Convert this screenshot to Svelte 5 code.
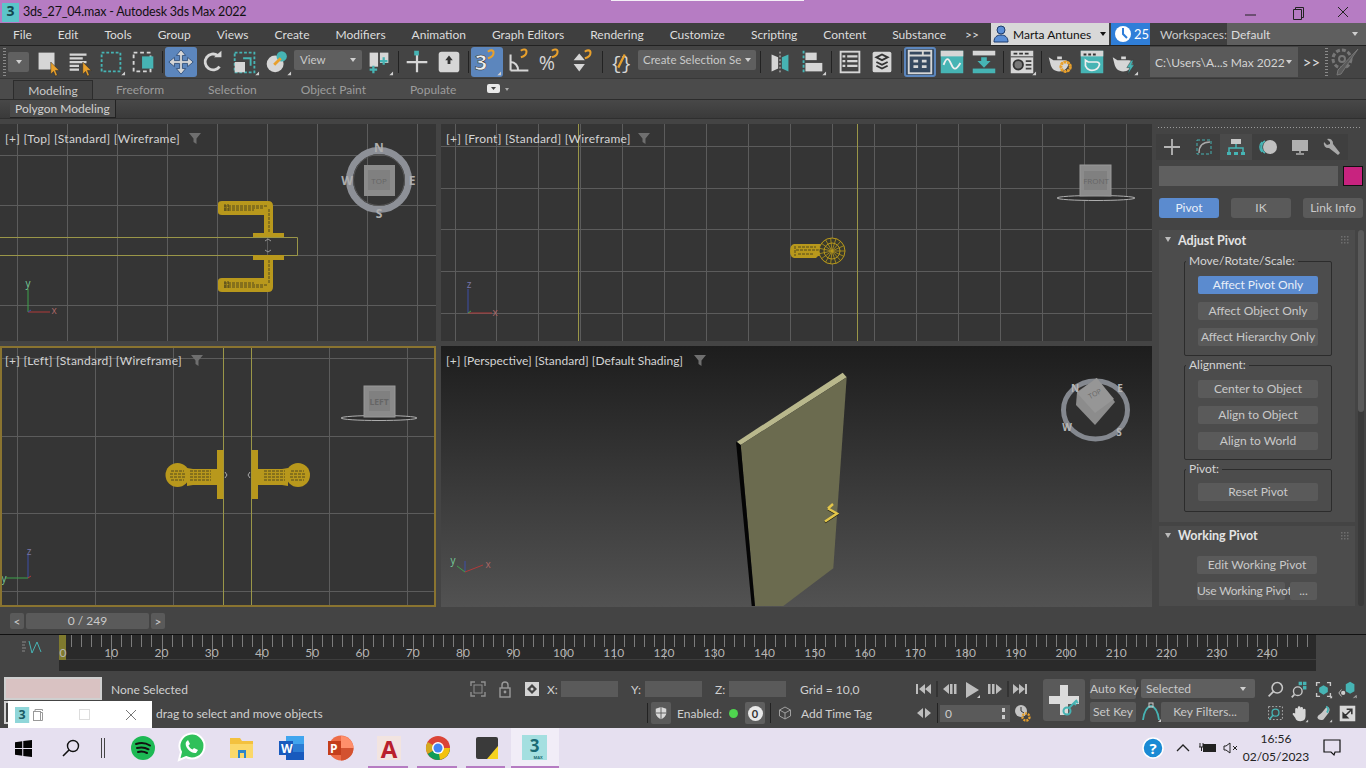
<script>
  const menu = ['File', 'Edit', 'Tools', 'Group', 'Views', 'Create', 'Modifiers', 'Animation', 'Graph Editors', 'Rendering', 'Customize', 'Scripting', 'Content', 'Substance'];
  const ribbonTabs = ['Freeform', 'Selection', 'Object Paint', 'Populate'];

  const T = '#46b4b4', W = '#d6d6d6', O = '#e8a02c';
  const corner = `<path d="M31 30v-4l-4 4z" fill="#d0d0d0"/>`;
  const cursor = (x, y) => `<path d="M${x} ${y}l0 13 3-3 2 5 2-1-2-5 4 0z" fill="${O}" stroke="#222" stroke-width=".5"/>`;
  const magnet = (x, y) => `<path d="M${x} ${y + 7}c3-1 6-3 6-6 0-3-4-3-6-1" fill="none" stroke="${O}" stroke-width="2.200"/>`;
  const teapot = (stroke) => `<path d="M4 11l5 3h12c3 0 4 2 4 4-1 5-5 8-10 8s-8-3-9-7zM13 10h5v3h-5z" fill="${stroke ? 'none' : W}" ${stroke ? `stroke="#eee" stroke-width="2"` : ''}/>`;

  const leftTools = [
    { w: 32, svg: `<rect x="7" y="6" width="17" height="18" fill="${W}"/>${cursor(20, 16)}` },
    { w: 32, svg: `<path d="M6 8h18M6 12h14M6 16h18M6 20h10M6 24h10" stroke="${W}" stroke-width="2.400"/>${cursor(20, 16)}` },
    { w: 32, svg: `<rect x="6" y="6" width="20" height="20" fill="none" stroke="${T}" stroke-width="2" stroke-dasharray="3 2"/>${corner}` },
    { w: 32, svg: `<rect x="6" y="6" width="18" height="20" fill="none" stroke="${W}" stroke-width="2" stroke-dasharray="4 3"/><rect x="15" y="10" width="12" height="13" fill="${T}"/>` },
    'sep',
    { w: 32, on: true, svg: `<path d="M16 3l5 6h-3.500v5.500H23V11l6 5-6 5v-3.500h-5.500V23H21l-5 6-5-6h3.500v-5.500H9V21l-6-5 6-5v3.500h5.500V9H11z" fill="${W}" stroke="#33527d"/>` },
    { w: 32, svg: `<path d="M23 21a8.500 8.500 0 1 1-2-12" fill="none" stroke="${W}" stroke-width="3"/><path d="M17 11h8V4z" fill="${W}"/>` },
    { w: 32, svg: `<rect x="5" y="6" width="21" height="21" fill="none" stroke="${T}" stroke-width="2" stroke-dasharray="3 2"/><rect x="5" y="16" width="11" height="11" fill="${W}"/><path d="M14 12h8v8" fill="none" stroke="${T}" stroke-width="2"/>${corner}` },
    { w: 32, svg: `<circle cx="14" cy="18" r="9" fill="${W}"/><circle cx="21" cy="10" r="5.500" fill="${T}"/><path d="M20 12l-7 7" stroke="${O}" stroke-width="3"/>${corner}` }
  ];

  const midTools = [
    { w: 32, svg: `<path d="M6 6h9v15H6z" fill="${W}"/><path d="M17 6h9v11h-9z" fill="${W}"/><path d="M10 20v8M6 24h8M21 11v8M17 15h8" stroke="${T}" stroke-width="2.400"/>${corner}` },
    'sep',
    { w: 32, svg: `<path d="M16 7v20M5 16h22" stroke="${W}" stroke-width="2.400"/><rect x="13" y="4" width="5" height="5" fill="${T}"/>` },
    { w: 32, svg: `<rect x="5" y="5" width="22" height="22" rx="3" fill="${W}"/><path d="M16 9l4 5h-2.500v4h-3v-4H12z" fill="#333"/>` },
    'sep',
    { w: 32, on: true, svg: `<text x="3" y="24" font-size="23" font-weight="700" fill="#eee" stroke="#333" stroke-width=".6" font-family="Open Sans">3</text>${magnet(17, 5)}${corner}` },
    { w: 32, svg: `<path d="M7 25V8M7 25h19M7 16c5 0 8 4 8 9" fill="none" stroke="${W}" stroke-width="2.200"/>${magnet(18, 4)}` },
    { w: 32, svg: `<text x="3" y="25" font-size="21" fill="${W}" font-family="Open Sans">%</text>${magnet(17, 4)}` },
    { w: 32, svg: `<path d="M6 14l6-7 6 7zM6 18h12l-6 8z" fill="${W}"/>${magnet(18, 5)}` },
    'sep',
    { w: 32, svg: `<text x="5" y="23" font-size="19" fill="${W}" font-family="Liberation Mono">{</text><text x="16" y="23" font-size="19" fill="${W}" font-family="Liberation Mono">}</text><path d="M13 22l7-14" stroke="${O}" stroke-width="2.400"/>` }
  ];

  const rightTools = [
    { w: 32, svg: `<path d="M7 8l7 3v12l-7 3z" fill="${W}"/><path d="M25 8l-7 3v12l7 3z" fill="${T}"/><path d="M16 5v23" stroke="${W}" stroke-dasharray="2 2"/>` },
    { w: 32, svg: `<path d="M7 4v24" stroke="${T}" stroke-width="2" stroke-dasharray="3 2"/><rect x="9" y="6" width="12" height="8" fill="${W}"/><rect x="9" y="17" width="18" height="9" fill="${W}"/>${corner}` },
    'sep',
    { w: 32, svg: `<rect x="6" y="5" width="20" height="22" fill="none" stroke="${W}" stroke-width="2"/><path d="M8 10h3M13 10h11M8 15h3M13 15h11M8 20h3M13 20h11" stroke="${W}" stroke-width="2.400"/>` },
    { w: 32, svg: `<rect x="6" y="5" width="20" height="22" rx="2" fill="${W}"/><path d="M10 11l6-3 6 3-6 3zM10 16l6 3 6-3M10 20l6 3 6-3" fill="none" stroke="#333" stroke-width="2"/>` },
    'sep',
    { w: 32, frame: true, svg: `<rect x="4" y="4" width="24" height="24" fill="none" stroke="${W}" stroke-width="2"/><path d="M4 9h24M19 4v5" stroke="${W}" stroke-width="2"/><path d="M9 15h5M18 15h5M9 21h5M18 21h5" stroke="${W}" stroke-width="3"/>` },
    { w: 32, svg: `<rect x="4" y="4" width="24" height="24" fill="${T}"/><rect x="4" y="4" width="24" height="6" fill="${W}"/><path d="M7 19c3-8 5-8 8-1s5 7 10-1" fill="none" stroke="#eee" stroke-width="2"/>` },
    { w: 32, svg: `<rect x="4" y="4" width="24" height="5" fill="${W}"/><rect x="4" y="23" width="24" height="5" fill="${T}"/><path d="M13 11h6v4h4l-7 7-7-7h4z" fill="${T}"/>` },
    'sep',
    { w: 32, svg: `<rect x="4" y="4" width="24" height="24" fill="${W}"/><path d="M7 7h4M13 7h4M19 7h4" stroke="#333" stroke-width="2"/><rect x="4" y="10" width="24" height="1" fill="#333"/><circle cx="12" cy="19" r="5" fill="#777" stroke="#333" stroke-width="2"/><path d="M20 15h6M20 19h6M20 23h6" stroke="#444" stroke-width="2"/>${corner}` },
    'sep',
    { w: 32, svg: `${teapot(false)}<circle cx="22" cy="21" r="5" fill="none" stroke="${O}" stroke-width="3.200" stroke-dasharray="2.500 1"/><circle cx="22" cy="21" r="5.500" fill="none" stroke="${O}" stroke-width="1"/>` },
    { w: 32, svg: `<rect x="4" y="4" width="24" height="24" fill="${T}"/><rect x="4" y="4" width="24" height="6" fill="${W}"/><path d="M7 8h3M12 8h3M17 8h3" stroke="#333" stroke-width="2"/><path d="M9 14l3 2h9c2 0 3 1 3 3-1 3-3 6-8 6s-6-3-7-5z" fill="none" stroke="#eee" stroke-width="1.800"/>` },
    { w: 32, svg: `${teapot(false)}<path d="M24 14l-5 8h3l-2 7 7-10h-3l2-5z" fill="${T}" stroke="#333" stroke-width=".5"/>${corner}` }
  ];

  const range = (from, to, step) => {
    const out = [];
    for (let v = from; v <= to; v += step) out.push(v);
    return out;
  };

  const ticks = range(0, 248, 2);
  const labels = range(0, 240, 10);
  const tickX = (f) => 61 + f * 5.025;

  const taskIcons = [
    { w: 48, svg: `<circle cx="20" cy="20" r="12" fill="#1db954"/><path d="M13 16c5-1.500 10-1 14 1.500M14 20c4-1 8-.7 11.500 1.300M15 24c3-.8 6-.5 9 1" stroke="#111" stroke-width="2" fill="none" stroke-linecap="round"/>` },
    { w: 50, svg: `<path d="M8 32l2-8a12.500 12.500 0 1 1 5 5z" fill="#2fc05a" stroke="#fff" stroke-width="2"/><path d="M15 14c-2 5 5 12 10 11l2-3-4-2-1.500 1.500c-2-1-3.500-2.500-4-4l1.500-1.500-2-4z" fill="#fff"/>` },
    { w: 50, svg: `<path d="M9 10h10l2 3h11v17H9z" fill="#f3c13e"/><path d="M9 16h23v14H9z" fill="#fbd869"/><rect x="17" y="22" width="8" height="8" fill="#2f86c9"/><rect x="19" y="25" width="4" height="5" fill="#fbd869"/>` },
    { w: 49, svg: `<rect x="15" y="8" width="18" height="24" fill="#2b7cd3"/><path d="M15 8h18v8H15z" fill="#41a5ee"/><path d="M15 24h18v8H15z" fill="#185abd"/><rect x="8" y="13" width="14" height="14" fill="#185abd"/><text x="10" y="25" font-size="12" font-weight="700" fill="#fff" font-family="Open Sans">W</text>` },
    { w: 49, svg: `<circle cx="21" cy="20" r="12.500" fill="#ed6c47"/><path d="M21 8a12.500 12.500 0 0 1 12.500 12H21z" fill="#ff8f6b"/><path d="M21 20h12.500A12.500 12.500 0 0 1 21 32.500z" fill="#d35230"/><rect x="8" y="13" width="13" height="14" fill="#c43e1c"/><text x="10" y="25" font-size="12" font-weight="700" fill="#fff" font-family="Open Sans">P</text>` },
    { w: 49, svg: `<rect x="8" y="8" width="24" height="24" fill="#f2e4e0"/><text x="20" y="30" text-anchor="middle" font-size="24" font-weight="700" fill="#b9202c" font-family="Open Sans">A</text>` },
    { w: 49, svg: `<circle cx="20" cy="20" r="12" fill="#db4437"/><path d="M20 20L9.600 26A12 12 0 0 1 9.600 14z" fill="#d4aa20"/><path d="M9.600 26A12 12 0 0 0 32 20H20z" fill="#0f9d58"/><path d="M32 20a12 12 0 0 1-10 11.800L20 20z" fill="#f4c20d"/><circle cx="20" cy="20" r="6" fill="#fff"/><circle cx="20" cy="20" r="4.500" fill="#4285f4"/>` },
    { w: 49, svg: `<rect x="9" y="9" width="22" height="22" rx="2" fill="#3a3a3a"/><path d="M20 31l11-13v13z" fill="#f6d21f"/>` }
  ];

  const grids = {
    top: { x: range(17, 436, 50.1), y: [155, 205, 255, 305] },
    front: { x: range(455, 1152, 41.95), y: [146, 188, 229, 271, 313] },
    left: { x: range(17, 436, 78), y: [358, 436, 513, 591] }
  };

  const rollouts = [
    { legend: 'Move/Rotate/Scale:', buttons: ['Affect Pivot Only', 'Affect Object Only', 'Affect Hierarchy Only'], active: 0 },
    { legend: 'Alignment:', buttons: ['Center to Object', 'Align to Object', 'Align to World'], active: -1 },
    { legend: 'Pivot:', buttons: ['Reset Pivot'], active: -1 }
  ];
</script>

{#snippet toolRow(items)}
  {#each items as t}
    {#if t === 'sep'}
      <span class="sep"></span>
    {:else}
      <span class="tool" class:on={t.on} class:frame={t.frame}>
        <svg viewBox="0 0 32 32" width="32" height="30">{@html t.svg}</svg>
      </span>
    {/if}
  {/each}
{/snippet}

{#snippet grip()}
  <svg class="grip" viewBox="0 0 9 9" width="9" height="9"><g fill="#6e6e6e">{#each [1, 4, 7] as a}{#each [1, 4, 7] as b}<rect x={a} y={b} width="1.500" height="1.500"/>{/each}{/each}</g></svg>
{/snippet}

{#snippet vpLabel(name, mode, fx)}
  <div class="vp-label">[+] [{name}] [Standard] [{mode}]
    <svg class="funnel" style="left:{fx}px" viewBox="0 0 14 14" width="14" height="14"><path d="M1 2h12L8.500 7.500V13l-3-2V7.500z" fill="#6f6f6f"/></svg>
  </div>
{/snippet}

<div class="app">
  <header class="title">
    <svg viewBox="0 0 18 20" width="18" height="20"><rect width="17" height="19" y="1" fill="#5cc5c9"/><text x="8.500" y="14" text-anchor="middle" font-size="14" font-weight="700" fill="#14484f" font-family="Open Sans">3</text></svg>
    <span class="title-text">3ds_27_04.max - Autodesk 3ds Max 2022</span>
    <span class="sliver"></span>
    <div class="win-btns">
      <svg viewBox="0 0 46 22" width="46" height="22"><path d="M17 14h11" stroke="#222"/></svg>
      <svg viewBox="0 0 46 22" width="46" height="22"><path d="M19.500 8.500h8v10h-8zM21.500 8.500V6.500h8v10h-2" fill="none" stroke="#222"/></svg>
      <svg viewBox="0 0 46 22" width="46" height="22"><path d="M18 6l10 10M28 6L18 16" stroke="#222"/></svg>
    </div>
  </header>

  <nav class="menubar">
    <div class="menu-items">
      {#each menu as m}<span>{m}</span>{/each}
      <span class="more">&gt;&gt;</span>
    </div>
    <div class="user">
      <svg viewBox="0 0 16 18" width="16" height="18"><circle cx="8" cy="5" r="4" fill="#5b8ed6" stroke="#1d3b6b"/><path d="M1 17c0-5 3-7 7-7s7 2 7 7z" fill="#5b8ed6" stroke="#1d3b6b"/></svg>
      <span>Marta Antunes</span><i class="caret dark"></i>
    </div>
    <div class="clock">
      <svg viewBox="0 0 18 18" width="18" height="18"><circle cx="9" cy="9" r="8" fill="#fff"/><path d="M9 3v6l4 4" fill="none" stroke="#2f7ed8" stroke-width="2"/></svg>
      <span>25</span>
    </div>
    <span class="ws-label">Workspaces:</span>
    <div class="ws-select"><span>Default</span><i class="caret"></i></div>
  </nav>

  <div class="toolbar">
    <span class="handle"></span>
    <span class="mini-drop"><i class="caret"></i></span>
    {@render toolRow(leftTools)}
    <span class="drop view"><span>View</span><i class="caret"></i></span>
    {@render toolRow(midTools)}
    <span class="drop named"><span>Create Selection Se</span><i class="caret"></i></span>
    <span class="sep wide"></span>
    {@render toolRow(rightTools)}
    <span class="path"><span>C:\Users\A...s Max 2022</span><i class="caret"></i></span>
    <span class="chev">&gt;&gt;</span>
    <span class="handle"></span>
    <svg class="ghost" viewBox="0 0 32 32" width="32" height="32"><circle cx="13" cy="13" r="9" fill="none" stroke="#777" stroke-width="3" stroke-dasharray="4 2"/><circle cx="13" cy="13" r="3" fill="none" stroke="#777" stroke-width="2"/><path d="M29 3L12 28l-4 1 1-5z" fill="#5a5a5a" stroke="#777"/></svg>
  </div>

  <div class="ribbon-tabs">
    <span class="rtab active">Modeling</span>
    {#each ribbonTabs as r}<span class="rtab">{r}</span>{/each}
    <svg class="rtab-icon" viewBox="0 0 24 12" width="24" height="12"><rect x="1" y="1" width="13" height="9" rx="2" fill="#e8e8e8"/><path d="M5 4h5L7.500 7z" fill="#444"/><path d="M19 5h4l-2 3z" fill="#aaa"/></svg>
  </div>
  <div class="ribbon-panel"><span class="pm">Polygon Modeling</span></div>

  <main class="main">
    <div class="viewports">
      <section class="vp">
        {@render vpLabel('Top', 'Wireframe', 183)}
        <svg viewBox="0 124 436 217" width="436" height="217">
          {#each grids.top.x as x}<path d="M{x} 124V341" class="gl"/>{/each}
          {#each grids.top.y as y}<path d="M0 {y}H436" class="gl"/>{/each}
          <path d="M0 237.500H297.500V255.500H0" fill="none" stroke="#9a9648"/>
          <g class="brass">
            <path d="M222 201h46q5 0 5 5v27h11v4h-31v-4h11v-18h-42q-4 0-4-3v-8q0-3 4-3z"/>
            <path d="M222 292h46q5 0 5-5v-27h11v-5h-31v5h11v18h-42q-4 0-4 3v8q0 3 4 3z"/>
          </g>
          <g class="wire">
            <path d="M224 206h44M224 208h40M224 210h30M225 204v8M228 204v8M269 209v24"/>
            <path d="M224 285h44M224 287h40M224 283h30M225 281v8M228 281v8M269 260v24"/>
          </g>
          <path d="M265 241l3-2 3 2M265 250l3 2 3-2" fill="none" stroke="#999"/>
          <circle cx="379" cy="180" r="29.500" fill="none" stroke="#8d9097" stroke-width="7"/>
          <circle cx="379" cy="180" r="25.500" fill="none" stroke="#555"/>
          <rect x="364" y="165" width="31" height="31" fill="#8b8b8b"/><rect x="368" y="170" width="22" height="20" fill="#808080"/>
          <text x="379" y="184" class="gz" font-size="8" fill="#666">TOP</text>
          <g class="gz-l"><text x="379" y="152">N</text><text x="379" y="218">S</text><text x="347" y="185">W</text><text x="412" y="185">E</text></g>
          <g fill="none" stroke-width="1"><path d="M28 312V289" stroke="#3fa34d"/><path d="M28 312H50" stroke="#b03a3a"/><path d="M28 312l3-2" stroke="#3c4fa8"/></g>
          <text x="28" y="287" class="ax" fill="#7c9">y</text><text x="54" y="314" class="ax" fill="#a66">x</text>
        </svg>
      </section>

      <section class="vp">
        {@render vpLabel('Front', 'Wireframe', 191)}
        <svg viewBox="441 124 711 217" width="711" height="217">
          {#each grids.front.x as x}<path d="M{x} 124V341" class="gl"/>{/each}
          {#each grids.front.y as y}<path d="M441 {y}H1152" class="gl"/>{/each}
          <path d="M578.500 124V341M857.500 124V341" stroke="#9a9648"/>
          <path class="brass" d="M794 244h28v12h-4l-2 2h-22q-4-1-4-7t4-7z"/>
          <g class="wire"><path d="M796 250h36M798 247h18M798 254h16M795 246v10"/></g>
          <circle cx="832" cy="251" r="13" fill="#3a3a2c" stroke="#b8981c"/>
          <g stroke="#b8981c" stroke-width=".8">
            {#each range(0, 345, 24) as a}<path d="M832 251L{832 + 13 * Math.cos(a * Math.PI / 180)} {251 + 13 * Math.sin(a * Math.PI / 180)}"/>{/each}
          </g>
          <circle cx="832" cy="251" r="8" fill="none" stroke="#b8981c"/>
          <ellipse cx="1096" cy="198" rx="39" ry="2.500" fill="#2c2c2c" stroke="#b0b0b0"/>
          <rect x="1080" y="165" width="31" height="31" fill="#8b8b8b" stroke="#999"/>
          <rect x="1084" y="171" width="23" height="19" fill="#808080"/>
          <text x="1096" y="184" class="gz" font-size="8" fill="#666">FRONT</text>
          <g fill="none"><path d="M468 313V289" stroke="#3c4fa8"/><path d="M468 313H492" stroke="#b03a3a"/><path d="M468 313l3-2" stroke="#3fa34d"/></g>
          <text x="469" y="288" class="ax" fill="#77a">z</text><text x="495" y="316" class="ax" fill="#a66">x</text>
        </svg>
      </section>

      <section class="vp active">
        {@render vpLabel('Left', 'Wireframe', 185)}
        <svg viewBox="0 346 436 261" width="436" height="261">
          {#each grids.left.x as x}<path d="M{x} 346V607" class="gl"/>{/each}
          {#each grids.left.y as y}<path d="M0 {y}H436" class="gl"/>{/each}
          <path d="M223.500 346V607M251.500 346V607" stroke="#9a9648"/>
          <g class="brass">
            <circle cx="177.500" cy="475" r="12"/>
            <path d="M187 468l6 1h24v-19h6.500v49H217v-14h-24l-6 1z"/>
            <circle cx="298" cy="475" r="12"/>
            <path d="M288 468l-6 1h-24v-19h-6.500v49h6.500v-14h24l6 1z"/>
          </g>
          <g class="wire">
            <path d="M171 471h13M170 474h15M170 477h15M171 480h13M190 471h21M190 474h21M190 477h21M190 480h21"/>
            <path d="M291 471h13M290 474h15M290 477h15M291 480h13M264 471h21M264 474h21M264 477h21M264 480h21"/>
          </g>
          <path d="M225 472l2 3-2 3M250 472l-2 3 2 3" fill="none" stroke="#aaa"/>
          <ellipse cx="379" cy="418" rx="38" ry="2.500" fill="#2c2c2c" stroke="#b0b0b0"/>
          <rect x="364" y="386" width="31" height="31" fill="#8b8b8b" stroke="#999"/>
          <rect x="369" y="391" width="21" height="20" fill="#808080"/>
          <text x="379" y="405" class="gz" font-size="8.500" font-weight="700" fill="#666">LEFT</text>
          <g fill="none"><path d="M28 578V555" stroke="#3c4fa8"/><path d="M28 578H6" stroke="#3fa34d"/><path d="M28 578l3 -2" stroke="#b03a3a"/></g>
          <text x="29" y="555" class="ax" fill="#77a">z</text><text x="4" y="582" class="ax" fill="#7c9">y</text>
        </svg>
      </section>

      <section class="vp persp">
        {@render vpLabel('Perspective', 'Default Shading', 247)}
        <svg viewBox="441 346 711 261" width="711" height="261">
          <path d="M737 441.700L842.700 372.700L846.700 377.300L740.700 445z" fill="#b9b88c"/>
          <path d="M740.700 445L846.700 377.300L833.300 568.300L783.300 606L755 606z" fill="#6b6b4f"/>
          <path d="M736 441.700L740.700 445L755 606L751.700 606z" fill="#050505"/>
          <path d="M825 522.500L837 514.500L828 509.500" fill="none" stroke="#1c1c10" stroke-width="2"/>
          <path d="M825 521.500L837 513.500L828 508.500M828 508.500L833 504" fill="none" stroke="#e3c64a" stroke-width="2.400"/>
          <ellipse cx="1095.500" cy="410" rx="32" ry="29" fill="#2f2f2f" stroke="#84888f" stroke-width="5"/>
          <path d="M1096.700 378L1115 402L1095 425L1076 405L1077 392z" fill="#8c8c8c"/>
          <path d="M1096.700 378L1114 399L1095 413L1077 393z" fill="#969696"/>
          <text x="1096" y="396" class="gz" font-size="7" fill="#666" transform="rotate(-28 1096 396)">TOP</text>
          <g class="gz-p"><text x="1075" y="392">N</text><text x="1120" y="392">E</text><text x="1067" y="431">W</text><text x="1119" y="436">S</text></g>
          <g fill="none"><path d="M465 572V561" stroke="#3c4fa8"/><path d="M465 572L483 565" stroke="#b03a3a"/><path d="M465 572L457 566" stroke="#3fa34d"/></g>
          <text x="453" y="564" class="ax" fill="#7c9">y</text><text x="488" y="568" class="ax" fill="#a66">x</text>
        </svg>
      </section>
    </div>

    <aside class="cmd">
      <div class="cmd-dots"></div>
      <div class="cmd-tabs">
        <span><svg viewBox="0 0 20 20" width="20" height="20"><path d="M10 2v16M2 10h16" stroke="#b5b5b5" stroke-width="1.800"/></svg></span>
        <span><svg viewBox="0 0 20 20" width="20" height="20"><rect x="3" y="3" width="14" height="14" fill="none" stroke="{T}" stroke-dasharray="3 2"/><path d="M5 16c0-7 4-11 11-11" fill="none" stroke="#aaa" stroke-width="1.400"/></svg></span>
        <span class="cur"><svg viewBox="0 0 20 20" width="20" height="20"><rect x="5" y="2" width="10" height="5" fill="#c8c8c8"/><path d="M10 7v4M3 15v-4h14v4" fill="none" stroke="{T}" stroke-width="1.500"/><rect x="1" y="15" width="4" height="3" fill="{T}"/><rect x="8" y="15" width="4" height="3" fill="{T}"/><rect x="15" y="15" width="4" height="3" fill="{T}"/></svg></span>
        <span><svg viewBox="0 0 20 20" width="20" height="20"><circle cx="12" cy="10" r="7" fill="#c0c0c0"/><path d="M7 4a7 7 0 0 0 0 12M4 5a7 7 0 0 0 0 10" fill="none" stroke="{T}" stroke-width="1.500"/></svg></span>
        <span><svg viewBox="0 0 20 20" width="20" height="20"><rect x="2" y="3" width="16" height="11" fill="#b0b0b0"/><path d="M10 14v2M6 17h8" stroke="#b0b0b0" stroke-width="1.600"/></svg></span>
        <span><svg viewBox="0 0 20 20" width="20" height="20"><path d="M15 2a4.500 4.500 0 0 0-6 5L2 16l2 2 9-7a4.500 4.500 0 0 0 5-6l-3 3-3-1v-2z" fill="#a8a8a8" transform="matrix(-1 0 0 1 20 0)"/></svg></span>
      </div>
      <div class="name-row"><span class="name-field"></span><span class="swatch"></span></div>
      <div class="sub-tabs">
        <button class="mbtn on">Pivot</button><button class="mbtn">IK</button><button class="mbtn">Link Info</button>
      </div>
      <div class="scroll-wrap">
        <div class="rollouts">
          <div class="rollout first">
            <h3><i class="tri"></i>Adjust Pivot{@render grip()}</h3>
            {#each rollouts as g}
              <fieldset>
                <legend>{g.legend}</legend>
                {#each g.buttons as b, i}<button class="mbtn rb" class:on={i === g.active}>{b}</button>{/each}
              </fieldset>
            {/each}
          </div>
          <div class="rollout second">
            <h3><i class="tri"></i>Working Pivot{@render grip()}</h3>
            <button class="mbtn rb wide">Edit Working Pivot</button>
            <div class="wp-row"><button class="mbtn use">Use Working Pivot</button><button class="mbtn dots">...</button></div>
          </div>
        </div>
        <div class="scrollbar"><span></span></div>
      </div>
    </aside>
  </main>

  <div class="frames">
    <button class="fbtn">&lt;</button>
    <div class="fslider">0 / 249</div>
    <button class="fbtn">&gt;</button>
  </div>

  <div class="track-row">
    <svg class="track-icon" viewBox="0 0 22 14" width="22" height="14"><path d="M1 2h4M1 5h3M1 8h4M1 11h3" stroke="#888"/><path d="M8 1l3 12 5-11 4 10" fill="none" stroke="{T}"/></svg>
    <svg class="ruler" viewBox="59 634 1257 37" width="1257" height="37">
      <rect x="59" y="634" width="1257" height="37" fill="#2a2a2a"/>
      <path d="M59 634.500H1316" stroke="#111"/>
      <path d="M59 659.500H1316" stroke="#3d3d3d"/>
      {#each ticks as f}
        <path d="M{Math.round(tickX(f)) + .5} 635V{f % 10 === 0 ? 659 : 647}" stroke="#7c7c7c"/>
      {/each}
      <rect x="59" y="635" width="7" height="25" fill="#7f7a2e"/>
      {#each labels as l}<text x={Math.max(tickX(l), 63)} y="657" text-anchor="middle">{l}</text>{/each}
    </svg>
  </div>

  <div class="status">
    <div class="swatches"><span class="sw1"></span><span class="sw2"></span></div>
    <div class="info">
      <div class="info-row">
        <span class="none-sel">None Selected</span>
        <svg viewBox="0 0 20 20" width="20" height="20" class="ic-a"><path d="M3 7V3h4M13 3h4v4M17 13v4h-4M7 17H3v-4" fill="none" stroke="#8f8f8f" stroke-width="1.400"/><rect x="6" y="6" width="8" height="8" fill="none" stroke="#8f8f8f"/></svg>
        <svg viewBox="0 0 14 20" width="14" height="20" class="ic-b"><rect x="2" y="9" width="10" height="9" fill="none" stroke="#9a9a9a" stroke-width="1.400"/><path d="M4 9V6a3 3 0 0 1 6 0v3" fill="none" stroke="#9a9a9a" stroke-width="1.400"/><circle cx="7" cy="13" r="1.400" fill="#9a9a9a"/></svg>
        <svg viewBox="0 0 16 16" width="16" height="16" class="ic-c"><rect x="1" y="1" width="14" height="14" fill="#d4d4d4"/><path d="M8 3l5 5-5 5-5-5z" fill="#444"/><circle cx="8" cy="8" r="1.500" fill="#d4d4d4"/></svg>
        <label>X:</label><span class="coord"></span>
        <label>Y:</label><span class="coord"></span>
        <label>Z:</label><span class="coord"></span>
        <span class="gridv">Grid = 10,0</span>
      </div>
      <div class="info-row second">
        <span class="prompt">drag to select and move objects</span>
        <span class="vline"></span>
        <span class="shield"><svg viewBox="0 0 16 16" width="14" height="14"><path d="M8 1l6 2v5c0 3-3 6-6 7-3-1-6-4-6-7V3z" fill="#d8d8d8"/><path d="M8 1v14M2 8h12" stroke="#555"/></svg></span>
        <span class="enabled">Enabled:</span>
        <i class="dot"></i>
        <span class="zero"><b>0</b></span>
        <span class="vline"></span>
        <svg class="cube" viewBox="0 0 14 14" width="14" height="14"><path d="M7 1l5.500 3v6L7 13l-5.500-3V4zM1.500 4L7 7l5.500-3M7 7v6" fill="none" stroke="#a0a0a0"/></svg>
        <span class="tag">Add Time Tag</span>
      </div>
    </div>
    <div class="anim">
      <div class="anim-row">
        <svg viewBox="0 0 114 20" width="114" height="20" fill="#bdbdbd">
          <path d="M1 5h2v10H1zM4 10l6-5v10zM10 10l6-5v10z"/><path d="M22 2v16" stroke="#222"/>
          <path d="M28 10l6-5v10zM35 5h2.500v10H35zM39 5h2.500v10H39z"/>
          <path d="M51 3l13 8-13 8z"/><path d="M65 19v-3l-3 3z" fill="#ccc"/>
          <path d="M73 5h2.500v10H73zM77 5h2.500v10H77zM81 5l6 5-6 5z"/><path d="M93 2v16" stroke="#222"/>
          <path d="M98 5l6 5-6 5zM104 5l6 5-6 5zM110 5h2v10h-2z"/>
        </svg>
      </div>
      <div class="anim-row">
        <svg class="arrows" viewBox="0 0 14 12" width="14" height="12" fill="#bdbdbd"><path d="M0 6l6-5v10zM14 6l-6-5v10z"/></svg>
        <span class="vline"></span>
        <span class="frame-spin">0<i></i></span>
        <svg class="tcfg" viewBox="0 0 18 18" width="18" height="18"><circle cx="7" cy="7" r="6" fill="#c4c4c4"/><path d="M7 3v4l3 2" fill="none" stroke="#333"/><circle cx="12" cy="13" r="3.500" fill="none" stroke="{O}" stroke-width="2.400" stroke-dasharray="2 1"/></svg>
      </div>
    </div>
    <button class="bigkey">
      <svg viewBox="0 0 42 42" width="42" height="42"><path d="M17 6h8v11h11v8H25v11h-8V25H6v-8h11z" fill="#dcdcdc"/><circle cx="24" cy="32" r="3.500" fill="none" stroke="{T}" stroke-width="2"/><path d="M26 29l8-8M31 24l2 2M33 22l2 2" fill="none" stroke="{T}" stroke-width="2"/></svg>
    </button>
    <div class="keys">
      <div class="key-row">
        <button class="kbtn auto">Auto Key</button>
        <span class="sel-drop"><span>Selected</span><i class="caret"></i></span>
      </div>
      <div class="key-row">
        <button class="kbtn auto">Set Key</button>
        <svg class="tang" viewBox="0 0 22 22" width="22" height="22"><path d="M3 19c1-8 3-13 8-14 5 1 7 6 8 14" fill="none" stroke="{T}" stroke-width="1.800"/><rect x="9" y="2" width="4" height="4" fill="none" stroke="#ccc"/><path d="M21 21v-3l-3 3z" fill="#ccc"/></svg>
        <button class="kbtn filt">Key Filters...</button>
      </div>
    </div>
    <div class="nav-grid">
      <svg viewBox="0 0 22 22" width="19" height="19"><circle cx="13" cy="9" r="6" fill="none" stroke="#c8c8c8" stroke-width="1.800"/><path d="M9 13l-6 6" stroke="#c8c8c8" stroke-width="2"/></svg>
      <svg viewBox="0 0 22 22" width="19" height="19"><circle cx="9" cy="13" r="5" fill="none" stroke="#c8c8c8" stroke-width="1.600"/><path d="M5 17l-3 3" stroke="#c8c8c8" stroke-width="2"/><rect x="10" y="2" width="4" height="4" fill="{T}"/><rect x="15" y="2" width="4" height="4" fill="{T}"/><rect x="15" y="7" width="4" height="4" fill="{T}"/></svg>
      <svg viewBox="0 0 22 22" width="19" height="19"><path d="M3 7V3h4M15 3h4v4M19 15v4h-4M7 19H3v-4" fill="none" stroke="#c8c8c8" stroke-width="1.600"/><path d="M11 6l5 3v5l-5 3-5-3V9z" fill="{T}"/><path d="M21 21v-3l-3 3z" fill="#ccc"/></svg>
      <svg viewBox="0 0 22 22" width="19" height="19"><path d="M14 2l5 3v8l-5 3-5-3V5z" fill="{T}"/><circle cx="6" cy="15" r="2.500" fill="#ccc"/><path d="M4 11l-3 4 3 4M21 21v-3l-3 3" fill="none" stroke="#ccc"/></svg>
      <svg viewBox="0 0 22 22" width="19" height="19"><rect x="3" y="3" width="16" height="15" fill="none" stroke="#bbb" stroke-dasharray="2 2"/><circle cx="11" cy="10" r="4" fill="none" stroke="{T}" stroke-width="1.500"/><path d="M8 13l-4 5" stroke="{T}" stroke-width="1.800"/></svg>
      <svg viewBox="0 0 22 22" width="19" height="19"><path d="M6 12V6a1.500 1.500 0 0 1 3 0V4a1.500 1.500 0 0 1 3 0v1a1.500 1.500 0 0 1 3 0v2a1.500 1.500 0 0 1 3 0v7c0 4-2 6-6 6-3 0-5-1-6-4l-3-4c0-2 2-2 3-1z" fill="#d8d8d8"/><path d="M21 21v-3l-3 3z" fill="#ccc"/></svg>
      <svg viewBox="0 0 22 22" width="19" height="19"><path d="M15 3c3 1 4 4 2 7l-6 8c-2 1-6 1-7-2 0-3 3-4 5-6z" fill="#c8c8c8"/><path d="M14 3c3 1 3 4 1 7" fill="none" stroke="{T}" stroke-width="2.200"/><path d="M21 21v-3l-3 3z" fill="#ccc"/></svg>
      <svg viewBox="0 0 22 22" width="19" height="19"><rect x="2" y="2" width="18" height="18" fill="#d8d8d8"/><path d="M6 16L16 6M10 6h6v6M6 16h5l-5-5z" fill="none" stroke="#333" stroke-width="1.800"/></svg>
    </div>
    <div class="popup">
      <svg viewBox="0 0 18 20" width="16" height="18"><rect width="16" height="18" y="1" fill="#8fd6d9"/><text x="8" y="15" text-anchor="middle" font-size="14" font-weight="700" fill="#1a5a64" font-family="Open Sans">3</text></svg>
      <svg class="pcopy" viewBox="0 0 12 12" width="12" height="12"><path d="M3.500 3.500h6v8h-6zM2 3V.5h7.500V2" fill="none" stroke="#999"/><rect x=".5" y="2.500" width="7" height="9" fill="#fff" stroke="#999"/></svg>
      <svg class="pmax" viewBox="0 0 12 12" width="12" height="12"><rect x=".5" y=".5" width="10" height="10" fill="none" stroke="#ddd"/></svg>
      <svg class="pclose" viewBox="0 0 12 12" width="12" height="12"><path d="M1 1l10 10M11 1L1 11" stroke="#777"/></svg>
    </div>
  </div>

  <footer class="taskbar">
    <svg class="win" viewBox="0 0 16 16" width="17" height="17"><path d="M0 2.200L6.800 1.200V7.500H0zM7.800 1L16 0V7.500H7.800zM0 8.500H6.800V14.800L0 13.800zM7.800 8.500H16V16L7.800 15z" fill="#050505"/></svg>
    <svg class="search" viewBox="0 0 18 18" width="18" height="18"><circle cx="11" cy="7" r="5.500" fill="none" stroke="#111" stroke-width="1.400"/><path d="M7 11l-6 6" stroke="#111" stroke-width="1.600"/></svg>
    <svg class="bars" viewBox="0 0 6 22" width="6" height="22"><path d="M1.500 1v20M4.500 1v20" stroke="#444"/></svg>
    <div class="apps">
      {#each taskIcons as t}
        <span class="app-ic" style="width:{t.w}px"><svg viewBox="0 0 40 40" width="40" height="40">{@html t.svg}</svg></span>
      {/each}
      <span class="app-ic cur-app"><svg viewBox="0 0 26 26" width="26" height="26"><rect width="25" height="25" fill="#a4dfe0"/><text x="12.500" y="17" text-anchor="middle" font-size="17" font-weight="700" fill="#1a6a74" font-family="Open Sans">3</text><text x="16" y="24" text-anchor="middle" font-size="4" font-weight="700" fill="#1a6a74" font-family="Open Sans">MAX</text></svg></span>
    </div>
    <div class="underlines"></div>
    <div class="tray">
      <svg viewBox="0 0 22 22" width="22" height="22"><circle cx="11" cy="11" r="10" fill="#1a8ad4" stroke="#fff" stroke-width="1.500"/><text x="11" y="16.500" text-anchor="middle" font-size="15" font-weight="700" fill="#fff" font-family="Open Sans">?</text></svg>
      <svg class="t-chev" viewBox="0 0 14 8" width="14" height="8"><path d="M1 7l6-6 6 6" fill="none" stroke="#222" stroke-width="1.300"/></svg>
      <svg class="t-bat" viewBox="0 0 18 14" width="18" height="14"><rect x="4" y="3" width="13" height="8" fill="#222"/><path d="M1 2v4M4 2v4M0 6h5M2.500 6v4" stroke="#222"/></svg>
      <svg class="t-vol" viewBox="0 0 16 14" width="16" height="14"><path d="M1 5h2l4-3v10L3 9H1z" fill="none" stroke="#222"/><path d="M10 5l4 4M14 5l-4 4" stroke="#222"/></svg>
      <div class="clock-txt"><span>16:56</span><span>02/05/2023</span></div>
      <svg class="t-note" viewBox="0 0 18 18" width="18" height="18"><path d="M1 1h16v12h-5l-1 3-3-3H1z" fill="none" stroke="#111" stroke-width="1.200"/></svg>
    </div>
  </footer>
</div>

<style>
  :global(body) { background: #444; overflow: hidden; }
  .app {
    width: 1366px;
    height: 768px;
    overflow: hidden;
    background: #444;
    font-family: "Lato", "Open Sans", sans-serif;
    font-size: 12px;
    color: #c9c9c9;
    display: flex;
    flex-direction: column;
    white-space: nowrap;
  }
  button { font: inherit; border: 0; padding: 0; }
  .caret {
    display: inline-block;
    width: 0; height: 0;
    border-left: 3px solid transparent;
    border-right: 3px solid transparent;
    border-top: 4px solid #cfcfcf;
  }
  .caret.dark { border-top-color: #111; }

  .title {
    height: 23px;
    flex: none;
    background: #b67cc3;
    color: #111;
    display: flex;
    align-items: center;
    padding-left: 2px;
    font-size: 12.5px;
    position: relative;
  }
  .title-text { margin-left: 3px; letter-spacing: -0.2px; }
  .sliver { position: absolute; left: 611px; top: 0; width: 193px; height: 1px; background: #f4eef6; }
  .win-btns { margin-left: auto; display: flex; }

  .menubar {
    height: 23px;
    box-sizing: border-box;
    flex: none;
    background: #3f3f3f;
    border-bottom: 1px solid #222;
    display: flex;
    align-items: center;
  }
  .menu-items { display: flex; gap: 26px; padding-left: 13px; width: 991px; box-sizing: border-box; flex: none; color: #ddd; }
  .more { margin-left: -7px; }
  .user {
    width: 118px; height: 22px; flex: none;
    background: #d8d8d8; color: #111;
    display: flex; align-items: center; gap: 4px; padding-left: 2px; box-sizing: border-box;
  }
  .user .caret { margin-left: 5px; }
  .clock {
    width: 39px; height: 22px; flex: none; margin-left: 2px;
    background: #2f7ed8; color: #fff; font-size: 13px;
    display: flex; align-items: center; gap: 2px; padding-left: 3px; box-sizing: border-box;
  }
  .ws-label { margin-left: 10px; width: 67px; flex: none; color: #ccc; }
  .ws-select {
    width: 139px; height: 22px; flex: none;
    background: #5f5f5f; color: #ddd;
    display: flex; align-items: center; justify-content: space-between; padding: 0 8px 0 4px; box-sizing: border-box;
  }

  .toolbar {
    height: 33px;
    box-sizing: border-box;
    flex: none;
    background: #444;
    border-bottom: 1px solid #383838;
    display: flex;
    align-items: center;
    padding-left: 3px;
  }
  .handle {
    width: 3px; height: 28px; flex: none;
    background: repeating-linear-gradient(to bottom, #8a8a8a 0 1px, transparent 1px 3px);
  }
  .mini-drop {
    width: 21px; height: 20px; flex: none; margin: 0 2px 0 2px;
    background: #606060; border-radius: 2px;
    display: flex; align-items: center; justify-content: center;
  }
  .tool { width: 32px; height: 30px; flex: none; display: block; border-radius: 3px; box-sizing: border-box; }
  .tool svg { display: block; }
  .tool.on { background: #5c86bd; }
  .tool.frame { background: #35485f; outline: 2px solid #5c86bd; outline-offset: -2px; }
  .sep { width: 6px; flex: none; height: 22px; background: linear-gradient(#222, #222) center / 1px 100% no-repeat; }
  .sep.wide { width: 8px; }
  .drop {
    height: 20px; flex: none; margin-top: -5px;
    background: #5f5f5f; border-radius: 2px;
    display: flex; align-items: center; justify-content: space-between; padding: 0 6px; box-sizing: border-box;
    color: #c9c9c9; font-size: 11.5px;
  }
  .drop.view { width: 68px; margin-left: 1px; margin-right: 1px; }
  .drop.named { width: 118px; margin-left: 1px; padding: 0 5px; }
  .path {
    width: 148px; height: 30px; flex: none; margin-left: 10px;
    background: #5a5a5a; color: #d4d4d4;
    display: flex; align-items: center; justify-content: space-between; padding: 0 6px 0 5px; box-sizing: border-box;
    font-size: 12px;
  }
  .chev { width: 27px; flex: none; text-align: center; font-size: 15px; color: #ddd; }
  .ghost { margin-left: 1px; flex: none; }

  .ribbon-tabs {
    height: 21px; flex: none;
    background: #4b4b4b;
    border-bottom: 1px solid #2c2c2c;
    display: flex; align-items: flex-end;
    padding-left: 13px; box-sizing: border-box;
    color: #9c9c9c;
  }
  .rtab { padding: 0 22px; height: 19px; line-height: 19px; }
  .rtab.active {
    width: 80px; padding: 0; text-align: center; box-sizing: border-box;
    background: #444; border: 1px solid #2c2c2c; border-bottom: 0; color: #c9c9c9; margin-right: 1px;
  }
  .rtab-icon { align-self: center; margin-left: 8px; }
  .ribbon-panel {
    height: 19px; box-sizing: border-box; flex: none;
    background: linear-gradient(#484848, #3a3a3a);
    border-bottom: 1px solid #2f2f2f;
    padding-left: 10px;
  }
  .pm {
    display: block; width: max-content; height: 18px; line-height: 17px; padding: 0 5px; box-sizing: border-box;
    background: #4a4a4a; border-right: 1px solid #222; border-bottom: 1px solid #222; color: #d0d0d0;
  }

  .main {
    height: 483px;
    flex: none;
    margin-top: 5px;
    display: flex;
  }
  .viewports {
    width: 1152px; flex: none;
    display: grid;
    grid-template-columns: 436px 711px;
    grid-template-rows: 217px 261px;
    gap: 5px;
  }
  .vp { background: #353535; position: relative; overflow: hidden; }
  .vp > svg { display: block; }
  .vp.active::after {
    content: ''; position: absolute; inset: 0;
    border: 2px solid #8a7430;
  }
  .vp.persp { background: linear-gradient(#1d1d1d, #525252); }
  .vp-label {
    position: absolute; left: 5px; top: 7px;
    color: #d4d4d4; font-size: 12px; letter-spacing: 0.25px; white-space: pre; line-height: 15px;
    z-index: 1;
  }
  .persp .vp-label { letter-spacing: 0; }
  .funnel { position: absolute; top: 0; }
  .gl { stroke: #5c5c5c; fill: none; shape-rendering: crispEdges; }
  .brass { fill: #b8981c; }
  .wire { stroke: #3b3520; stroke-width: .8; fill: none; stroke-dasharray: 3 1; }
  .gz { text-anchor: middle; font-family: "Open Sans", sans-serif; }
  .gz-l text { fill: #aeaeae; font-size: 12px; font-weight: 700; text-anchor: middle; font-family: "Open Sans", sans-serif; }
  .gz-p text { fill: #b5b5b5; font-size: 10px; font-weight: 700; text-anchor: middle; font-family: "Open Sans", sans-serif; }
  .ax { font-size: 10px; text-anchor: middle; font-family: "Open Sans", sans-serif; }

  .cmd { width: 208px; flex: none; margin-left: 6px; }
  .cmd-dots {
    height: 1px; margin: 3px 4px 0 0;
    background: repeating-linear-gradient(to right, #9a9a9a 0 1px, transparent 1px 3px);
  }
  .cmd-tabs { display: flex; margin-top: 6px; height: 26px; background: #3f3f3f; width: 192px; margin-left: -2px; }
  .cmd-tabs span { width: 32px; height: 26px; display: flex; align-items: center; justify-content: center; }
  .cmd-tabs .cur { background: #4a4a4a; }
  .name-row { display: flex; margin: 6px 0 0 1px; gap: 5px; }
  .name-field { width: 179px; height: 20px; background: #5f5f5f; }
  .swatch { width: 18px; height: 18px; background: #c8237f; border: 1px solid #111; }
  .sub-tabs { display: flex; gap: 12px; margin: 12px 0 0 1px; }
  .mbtn {
    display: block; height: 18px; background: #5a5a5a; color: #c9c9c9; border-radius: 2px;
    text-align: center; font-size: 12px; line-height: 18px;
  }
  .mbtn.on { background: #5b8bcf; color: #e8eef8; }
  .sub-tabs .mbtn { width: 60px; height: 20px; border-radius: 3px; }
  .scroll-wrap { display: flex; margin: 12px 0 0 1px; }
  .rollouts { width: 196px; flex: none; }
  .rollout { background: #4c4c4c; position: relative; }
  .rollout.first { height: 292px; padding-top: 1px; box-sizing: border-box; }
  .rollout.second { height: 80px; margin-top: 4px; }
  .rollout h3 { margin: 0; height: 18px; padding: 2px 0 0 19px; font-size: 12.5px; font-weight: 700; color: #e4e4e4; line-height: 16px; }
  .rollout.second h3 { height: 20px; }
  .tri {
    position: absolute; left: 6px; top: 7px; width: 0; height: 0;
    border-left: 3.500px solid transparent; border-right: 3.500px solid transparent; border-top: 5px solid #bbb;
  }
  .grip { position: absolute; right: 6px; top: 5px; }
  fieldset {
    margin: 3px 0 0 25px; width: 148px; box-sizing: border-box; min-width: 0;
    border: 1px solid #2c2c2c; border-radius: 2px;
    padding: 8px 13px 9px;
  }
  fieldset + fieldset { margin-top: 2px; }
  fieldset:last-child { padding-top: 7px; padding-bottom: 10px; }
  legend { padding: 0 3px; margin-left: -12px; font-size: 12px; color: #d4d4d4; line-height: 14px; }
  .rb { width: 120px; margin-bottom: 8px; }
  fieldset .rb:last-child { margin-bottom: 0; }
  .rb.wide { margin: 8px 0 8px 38px; }
  .wp-row { display: flex; gap: 5px; margin-left: 38px; }
  .use { width: 88px; letter-spacing: -0.2px; }
  .dots { width: 27px; }
  .scrollbar { width: 6px; margin-left: 3px; background: #3a3a3a; border-radius: 3px; height: 376px; }
  .scrollbar span { display: block; height: 182px; background: #5a5a5a; border-radius: 3px; }

  .frames { height: 27px; flex: none; display: flex; align-items: flex-start; padding: 6px 0 0 10px; box-sizing: border-box; gap: 2px; }
  .fbtn { width: 14px; height: 16px; line-height: 15px; background: #5a5a5a; color: #ccc; border-radius: 2px; }
  .fslider { width: 123px; height: 16px; line-height: 16px; text-align: center; background: #5a5a5a; border-radius: 2px; }

  .track-row { height: 37px; flex: none; position: relative; padding-left: 59px; box-sizing: border-box; box-shadow: inset 0 1px 0 #111; }
  .track-icon { position: absolute; left: 21px; top: 6px; }
  .ruler { display: block; }
  .ruler text { fill: #b5b5b5; font-size: 12px; font-family: "Lato", sans-serif; }

  .status { height: 57px; flex: none; display: flex; position: relative; }
  .swatches { width: 106px; flex: none; padding: 6px 0 0 4px; box-sizing: border-box; display: flex; flex-direction: column; gap: 1px; }
  .sw1 { width: 98px; height: 23px; box-sizing: border-box; background: #d9c2c2; border: 2px solid #cfcfcf; }
  .sw2 { width: 98px; height: 23px; box-sizing: border-box; border: 2px solid #cfcfcf; }
  .info { width: 800px; flex: none; padding-top: 6px; }
  .info-row { height: 24px; display: flex; align-items: center; color: #d0d0d0; }
  .none-sel { margin-left: 5px; width: 357px; flex: none; }
  .ic-b { margin-left: 10px; }
  .ic-c { margin-left: 12px; }
  .info-row label { width: 14px; margin-left: 7px; flex: none; }
  .coord { width: 57px; height: 16px; background: #5a5a5a; flex: none; margin-left: 0; margin-right: 6px; }
  .gridv { margin-left: 8px; }
  .prompt { margin-left: 50px; width: 491px; flex: none; }
  .vline { width: 1px; height: 20px; background: #222; flex: none; }
  .shield { width: 20px; height: 22px; margin-left: 3px; background: #5a5a5a; border-radius: 2px; display: flex; align-items: center; justify-content: center; flex: none; }
  .enabled { margin-left: 6px; width: 52px; flex: none; }
  .dot { width: 9px; height: 9px; border-radius: 50%; background: #4fd44f; margin-left: 0; flex: none; }
  .zero { width: 20px; height: 22px; margin-left: 7px; margin-right: 5px; background: #5f5f5f; border-radius: 2px; display: flex; align-items: center; justify-content: center; flex: none; }
  .zero b { width: 15px; height: 15px; line-height: 15px; border-radius: 50%; background: #e8e8e8; color: #333; text-align: center; font-size: 11px; }
  .cube { margin-left: 7px; flex: none; }
  .tag { margin-left: 9px; }

  .anim { width: 137px; flex: none; padding: 6px 0 0 9px; box-sizing: border-box; }
  .anim-row { height: 24px; display: flex; align-items: center; }
  .arrows { margin-left: 2px; margin-right: 6px; }
  .frame-spin { width: 70px; height: 17px; line-height: 17px; margin-left: 2px; padding-left: 5px; box-sizing: border-box; background: #5a5a5a; color: #ccc; position: relative; }
  .frame-spin i { position: absolute; right: 5px; top: 3px; width: 3px; height: 11px; background: linear-gradient(#ccc 0 4px, transparent 4px 7px, #ccc 7px); }
  .tcfg { margin-left: 4px; }
  .bigkey { width: 42px; height: 42px; margin-top: 8px; background: #5a5a5a; border-radius: 3px; flex: none; }
  .bigkey svg { display: block; }
  .keys { margin: 8px 0 0 5px; width: 165px; flex: none; }
  .key-row { display: flex; height: 19px; margin-bottom: 4px; align-items: center; }
  .kbtn { height: 20px; background: #5a5a5a; color: #c9c9c9; border-radius: 2px; text-align: center; font-size: 12px; }
  .kbtn.auto { width: 46px; flex: none; }
  .kbtn.filt { width: 88px; flex: none; margin-left: -1px; }
  .sel-drop { width: 114px; height: 19px; margin-left: 5px; background: #5f5f5f; border-radius: 2px; display: flex; align-items: center; justify-content: space-between; padding: 0 9px 0 5px; box-sizing: border-box; }
  .tang { margin-left: 4px; flex: none; }
  .nav-grid { margin: 6px 0 0 8px; display: grid; grid-template-columns: repeat(4, 24px); grid-auto-rows: 24px; align-items: center; justify-items: center; height: 48px; }

  .popup {
    position: absolute; left: 8px; top: 30px; width: 144px; height: 27px;
    background: #fff; display: flex; align-items: center; padding-left: 7px; box-sizing: border-box;
  }
  .pcopy { margin-left: 2px; }
  .pmax { margin-left: 34px; }
  .pclose { margin-left: 34px; }

  .taskbar {
    flex: 1; background: #e6e0f0; display: flex; align-items: center; position: relative;
    padding-left: 15px; color: #111;
  }
  .search { margin-left: 30px; }
  .bars { margin-left: 20px; }
  .apps { display: flex; align-items: center; margin-left: 17px; height: 100%; }
  .app-ic { display: flex; align-items: center; justify-content: flex-start; height: 100%; flex: none; }
  .cur-app { width: 48px; margin-left: -5px; background: #f1edf7; justify-content: center; }
  .underlines {
    position: absolute; left: 368px; bottom: 0; width: 191px; height: 2px;
    background: linear-gradient(to right, #b57bc2 0 40px, transparent 40px 49px, #b57bc2 49px 89px, transparent 89px 98px, #b57bc2 98px 137px, transparent 137px 143px, #b57bc2 143px);
  }
  .tray { margin-left: auto; display: flex; align-items: center; padding-right: 25px; }
  .t-chev { margin-left: 12px; }
  .t-bat { margin-left: 9px; }
  .t-vol { margin-left: 6px; }
  .clock-txt { margin-left: 7px; width: 60px; display: flex; flex-direction: column; align-items: center; gap: 6px; font-size: 12px; line-height: 12px; color: #222; }
  .t-note { margin-left: 17px; }
</style>
